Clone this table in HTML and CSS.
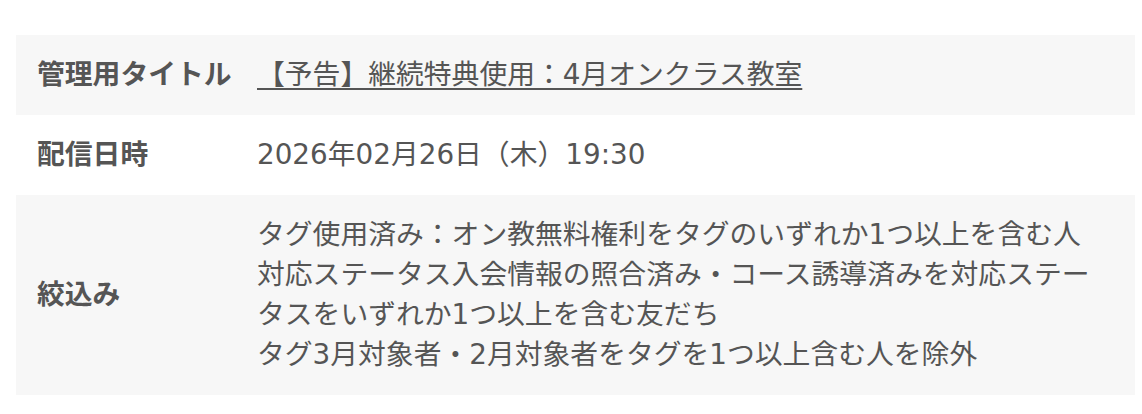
FILE: index.html
```html
<!DOCTYPE html>
<html lang="ja">
<head>
<meta charset="utf-8">
<link rel="stylesheet" href="styles.css">
</head>
<body>
<div class="page">
  <table class="info">
    <tr class="row shaded">
      <th class="label">管理用タイトル</th>
      <td class="value"><a class="title-link" href="#">【予告】継続特典使用：4月オンクラス教室</a></td>
    </tr>
    <tr class="row">
      <th class="label">配信日時</th>
      <td class="value">2026年02月26日（木）19:30</td>
    </tr>
    <tr class="row shaded">
      <th class="label">絞込み</th>
      <td class="value">
        <div>タグ使用済み：オン教無料権利をタグのいずれか1つ以上を含む人</div>
        <div>対応ステータス入会情報の照合済み・コース誘導済みを対応ステータスをいずれか1つ以上を含む友だち</div>
        <div>タグ3月対象者・2月対象者をタグを1つ以上含む人を除外</div>
      </td>
    </tr>
  </table>
</div>
</body>
</html>
```
FILE: styles.css
```css
html, body {
  margin: 0;
  padding: 0;
  background: #fff;
}
.page {
  padding: 35px 7px 20px 16px;
}
.info {
  width: 100%;
  border-collapse: collapse;
  font-family: "DejaVu Sans", "Noto Sans CJK JP", sans-serif;
  font-size: 27.8px;
  line-height: 40px;
  color: #555;
}
.row.shaded {
  background: #f7f7f7;
}
.label {
  width: 220px;
  padding: 20px 0 20px 21px;
  text-align: left;
  vertical-align: middle;
  font-weight: bold;
  white-space: nowrap;
}
.value {
  padding: 20px 20px 20px 0;
  vertical-align: middle;
}
.title-link {
  color: #555;
  text-decoration: underline;
  text-decoration-thickness: 2px;
  text-underline-offset: 4px;
}
```
